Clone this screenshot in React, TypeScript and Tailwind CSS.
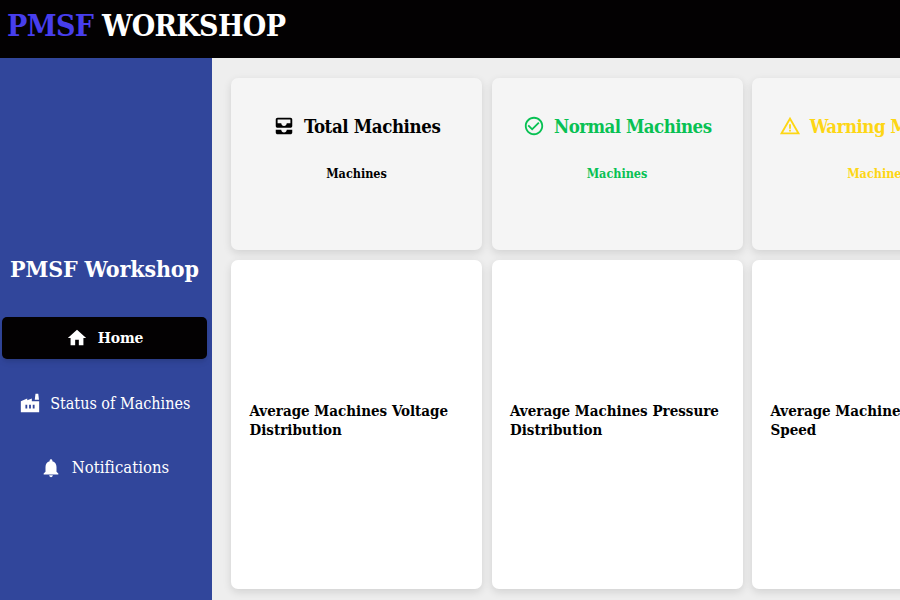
import React from "react";
import {
  MdAllInbox,
  MdCheckCircleOutline,
  MdFactory,
  MdHome,
  MdNotifications,
  MdWarningAmber,
} from "react-icons/md";

const stats = [
  { title: "Total Machines", icon: MdAllInbox, color: "text-black", tracking: "tracking-[-0.38px]", gap: "gap-[9.5px]" },
  { title: "Normal Machines", icon: MdCheckCircleOutline, color: "text-[#08c153]", tracking: "tracking-[-0.53px]", gap: "gap-[9.5px]" },
  { title: "Warning Machines", icon: MdWarningAmber, color: "text-[#fdd614]", tracking: "tracking-[-0.5px]", gap: "gap-[9px]" },
];

const charts = [
  ["Average Machines Voltage", "Distribution"],
  ["Average Machines Pressure", "Distribution"],
  ["Average Machines Rotational", "Speed"],
];

export default function App() {
  return (
    <div className="flex h-[600px] w-[900px] flex-col overflow-hidden bg-[#eeeeee] font-['DejaVu_Serif_Condensed','DejaVu_Serif',serif] [font-stretch:condensed]">
      <header className="flex h-[58px] shrink-0 items-start bg-[#030102] pl-[7px] pt-[6px]">
        <h1 className="whitespace-nowrap text-[30px] font-bold leading-10 tracking-[-0.65px] text-white">
          <span className="text-[#473eed]">PMSF</span> WORKSHOP
        </h1>
      </header>
      <div className="flex min-h-0 flex-1">
        <aside className="flex w-[212px] shrink-0 flex-col bg-[#31469b] pl-[2px] pr-[5px] pt-[193px] text-white">
          <h2 className="whitespace-nowrap pl-2 text-[23px] font-bold leading-9 tracking-[-0.15px]">PMSF Workshop</h2>
          <nav className="mt-[30px] flex flex-col gap-[23px] whitespace-nowrap text-base">
            <a className="flex h-[42px] items-center justify-center gap-[10px] rounded-[5px] bg-[#030102] font-bold shadow-md">
              <MdHome className="size-[22px]" />
              <span className="text-[15.5px] tracking-[-0.1px]">Home</span>
            </a>
            <a className="flex h-[42px] items-center justify-center gap-[9.5px]">
              <MdFactory className="size-[22px]" />
              <span className="pt-px">Status of Machines</span>
            </a>
            <a className="flex h-[42px] items-center justify-center gap-[10px]">
              <MdNotifications className="size-[22px]" />
              <span className="pt-px text-[16.5px] tracking-[0.05px]">Notifications</span>
            </a>
          </nav>
        </aside>
        <main className="grid shrink-0 grid-cols-[repeat(3,251px)] grid-rows-[172px_329px] gap-x-[9.5px] gap-y-[10px] pl-[19px] pt-5">
          {stats.map(({ title, icon: Icon, color, tracking, gap }) => (
            <section key={title} className={`flex flex-col items-center rounded-[7px] bg-[#f5f5f5] pt-9 shadow-[0_3px_8px_rgba(0,0,0,0.12)] ${color}`}>
              <div className={`flex h-6 items-center ${gap}`}>
                <Icon className="size-[22px]" />
                <h3 className={`whitespace-nowrap pt-px text-[18.5px] font-bold leading-6 ${tracking}`}>{title}</h3>
              </div>
              <p className="mt-[25.5px] text-[12.5px] font-bold leading-5">Machines</p>
            </section>
          ))}
          {charts.map(([first, second]) => (
            <section key={first} className="flex flex-col justify-center rounded-[7px] bg-white pb-[7px] pl-[18.5px] shadow-[0_3px_8px_rgba(0,0,0,0.12)]">
              <h4 className="whitespace-nowrap text-[15px] font-bold leading-[19px] text-black">
                {first}<br />{second}
              </h4>
            </section>
          ))}
        </main>
      </div>
    </div>
  );
}
